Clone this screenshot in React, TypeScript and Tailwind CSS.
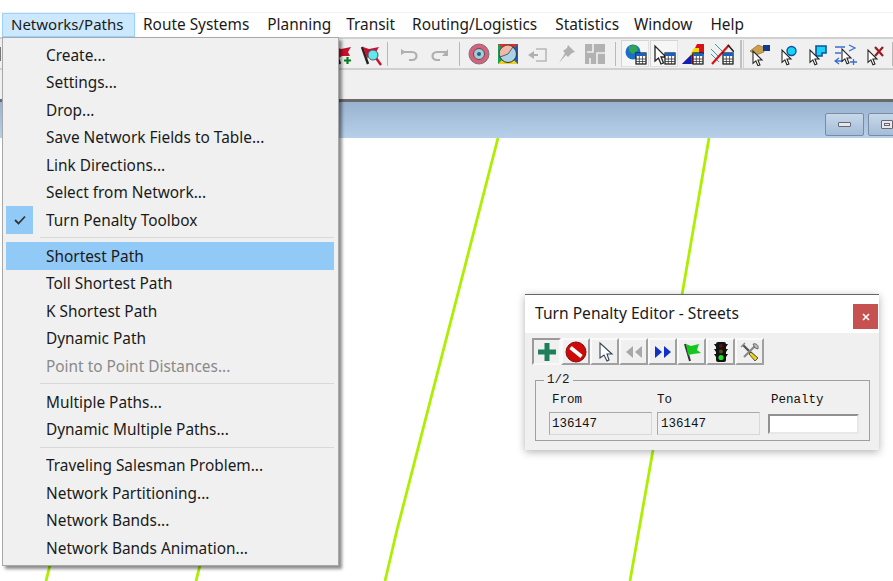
import React from "react";

const sans = { fontFamily: '"Noto Sans", sans-serif' };

const Ic = ({ children, w = 24, cls = "" }: { children: React.ReactNode; w?: number; cls?: string }) => (
  <svg width={w} height={24} viewBox={`0 0 ${w} 24`} className={`shrink-0 ${cls}`}>{children}</svg>
);

const Cursor = ({ x = 0, y = 4, s = 0.82 }: { x?: number; y?: number; s?: number }) => (
  <path transform={`translate(${x} ${y}) scale(${s})`} d="M0 0V15L3.5 12L6 18L8.5 17L6 11H11Z" fill="#fff" stroke="#222" strokeWidth="1.3" />
);

const Grid = ({ x, y }: { x: number; y: number }) => (
  <g transform={`translate(${x} ${y})`}>
    <rect x="0" y="0" width="10" height="11" fill="#fff" stroke="#111" strokeWidth="1.2" />
    <rect x="0" y="0" width="10" height="3" fill="#1560c0" />
    <path d="M3.3 3V11M6.6 3V11M0 6H10M0 8.5H10" stroke="#333" strokeWidth=".8" />
  </g>
);

const Flag = ({ children }: { children: React.ReactNode }) => (
  <Ic w={22}>
    <path d="M2 5L8 22" stroke="#222" strokeWidth="2.4" />
    <path d="M3 5L9 7L19 5L16 10L18 14L10 14L7 16Z" fill="#c8102e" />
    {children}
  </Ic>
);

function MenuBar() {
  const items: [string, string][] = [
    ["Route Systems", "ml-[8px]"],
    ["Planning", "ml-[18px]"],
    ["Transit", "ml-[15px]"],
    ["Routing/Logistics", "ml-[17px]"],
    ["Statistics", "ml-[18px]"],
    ["Window", "ml-[15px]"],
    ["Help", "ml-[18px]"],
  ];
  return (
    <div className="flex h-[24px] items-center bg-white pl-[2px] text-[15.4px] text-[#1a1a1a]">
      <div className="flex h-[24px] w-[133px] items-center border border-[#99d1ff] bg-[#cce8ff] pb-[2px] pl-[8px] text-[15px]">Networks/Paths</div>
      {items.map(([t, m]) => (
        <span key={t} className={m}>{t}</span>
      ))}
    </div>
  );
}

function Toolbar() {
  return (
    <div className="flex h-[33px] items-center border-y-2 border-y-[#d0d0d0] bg-[#f0f0f0]">
      <div className="h-[14px] w-[2px] bg-[#777]" />
      <div className="ml-[331px] flex items-center gap-[6px]">
        <Flag>
          <path d="M12 18.5H19M15.5 15V22" stroke="#0a7a1e" strokeWidth="2.2" />
        </Flag>
        <Flag>
          <path d="M16 16L21 23" stroke="#c8102e" strokeWidth="2.4" />
          <circle cx="13" cy="13" r="5" fill="#5fe8ee" stroke="#556" />
        </Flag>
      </div>
      <div className="ml-[5px] h-[24px] w-px bg-[#b8b8b8]" />
      <div className="ml-[10px] flex items-center gap-[5px]">
        <Ic>
          <path d="M4 10H14C20 10 20 18 14 18H11" fill="none" stroke="#b0b0b0" strokeWidth="2.2" />
          <path d="M3 7V13L8 10Z" fill="#b0b0b0" />
        </Ic>
        <Ic>
          <path d="M20 10H10C4 10 4 18 10 18H13" fill="none" stroke="#b0b0b0" strokeWidth="2.2" />
          <path d="M21 7V14H15Z" fill="#b0b0b0" />
        </Ic>
      </div>
      <div className="ml-[8px] h-[24px] w-px bg-[#b8b8b8]" />
      <div className="ml-[7px] flex items-center gap-[5px]">
        <Ic>
          <circle cx="12" cy="12" r="10" fill="#d95f7c" stroke="#777" />
          <circle cx="12" cy="12" r="5.5" fill="#a9c9d8" stroke="#555" />
          <circle cx="12" cy="12" r="2" fill="#1c6a80" />
        </Ic>
        <Ic>
          <rect x="2" y="2" width="20" height="20" fill="#17a05a" />
          <path d="M2 2H22L12 12Z" fill="#d8322a" />
          <path d="M2 22L12 12L22 22Z" fill="#f0d020" />
          <path d="M22 2V22L12 12Z" fill="#1560c0" />
          <circle cx="12" cy="12" r="8.5" fill="#a9d3e8" stroke="#333" />
          <path d="M12 12L17 5A8.5 8.5 0 0 0 4 15Z" fill="#f0b8a8" stroke="#333" strokeWidth=".7" />
        </Ic>
        <Ic>
          <path d="M11 7H21V19H11" fill="none" stroke="#b8b8b8" strokeWidth="1.6" />
          <path d="M3 12H7V9L13 13L7 17V14H3Z" fill="#b0b0b0" transform="matrix(-1 0 0 1 16 0)" />
        </Ic>
        <Ic>
          <path d="M14 3L21 10L18 11L14 15L12 13L5 21L11 11L9 9L13 6Z" fill="#b0b0b0" />
        </Ic>
        <Ic>
          <rect x="2" y="2" width="20" height="20" fill="#b2b2b2" />
          <path d="M10 2V10H4M14 22V11H22M7 16V22" stroke="#f0f0f0" strokeWidth="1.6" fill="none" />
        </Ic>
      </div>
      <div className="ml-[8px] h-[24px] w-px bg-[#b8b8b8]" />
      <div className="ml-[5px] flex h-[28px] items-center gap-px">
        <div className="flex h-[27px] w-[28px] items-center justify-center border border-[#e0e0e0] border-l-[#d4d4d4] border-t-[#d4d4d4] bg-[#f6f6f6]">
          <Ic>
            <circle cx="10" cy="10" r="7.5" fill="#1c6fc4" />
            <path d="M6 4L13 3L15 8L10 12L6 9Z" fill="#2ea84a" />
            <Grid x={13} y={11} />
          </Ic>
        </div>
        <div className="flex h-[27px] w-[28px] items-center justify-center border border-[#e0e0e0] border-l-[#d4d4d4] border-t-[#d4d4d4] bg-[#f6f6f6]">
          <Ic>
            <Cursor x={3} y={4} s={1} />
            <Grid x={13} y={11} />
          </Ic>
        </div>
        <div className="flex h-[27px] w-[28px] items-center justify-center">
          <Ic>
            <path d="M1 22L11 12L16 2H23V12H12V22Z" fill="#d8101a" />
            <path d="M7 17L13 6H18V12H11Z" fill="#f5d800" />
            <path d="M1 22L10 13V22Z" fill="#1020b0" />
            <Grid x={12} y={11} />
          </Ic>
        </div>
        <div className="flex h-[27px] w-[28px] items-center justify-center">
          <Ic>
            <path d="M1 7L9 15M1 12L9 20M5 2L12 9" stroke="#2aa0a8" strokeWidth="1" />
            <path d="M2 22L19 3" stroke="#d8101a" strokeWidth="2.2" />
            <path d="M18 3L24 10" stroke="#222" strokeWidth="1.6" />
            <Grid x={13} y={11} />
          </Ic>
        </div>
      </div>
      <div className="ml-[4px] h-[28px] w-[3px] border-x border-x-[#c0c0c0]" />
      <div className="ml-[1px] h-[28px] w-[4px] self-end border-l border-l-[#d0d0d0]" />
      <div className="ml-px flex items-center gap-[5px]">
        <Ic>
          <path d="M3 9L11 3L16 5L17 10L9 13Z" fill="#c9a050" stroke="#8a6a30" strokeWidth=".7" />
          <path d="M16 3H23V9H16Z" fill="#103a90" />
          <Cursor x={6} y={9} />
        </Ic>
        <Ic>
          <circle cx="15.5" cy="9" r="4.5" fill="#18d4f4" stroke="#1050a0" strokeWidth="1.4" />
          <Cursor x={6} y={8} />
        </Ic>
        <Ic>
          <path d="M11 4H21V11H17V14H11Z" fill="#18d4f4" stroke="#1050a0" strokeWidth="1.6" />
          <Cursor x={5} y={8} />
        </Ic>
        <Ic>
          <path d="M1 5H11M15 3L21 6L15 9M1 11H7M1 19H9M16 20H23M19.5 17V23M5 22L1 19L5 16" fill="none" stroke="#3a6fd0" strokeWidth="1.3" />
          <Cursor x={8} y={7} />
        </Ic>
        <Ic>
          <path d="M12 5L20 14M20 5L12 14" stroke="#9c1a20" strokeWidth="2.2" />
          <Cursor x={5} y={8} />
        </Ic>
      </div>
      <div className="ml-[5px] h-[24px] w-px bg-[#b8b8b8]" />
    </div>
  );
}

function Lines() {
  return (
    <svg width="893" height="443" viewBox="0 138 893 443" className="absolute left-0 top-0">
      <g fill="none" stroke="#aeee00" strokeWidth="2.8">
        <path d="M498 138L397 530L385 581" />
        <path d="M709 138L682 295" />
        <path d="M653 450L630 581" />
        <path d="M50 565L46 581" />
        <path d="M200 565L196 581" />
      </g>
    </svg>
  );
}

function Menu() {
  const Item = ({ t, check, active, off }: { t: string; check?: boolean; active?: boolean; off?: boolean }) => (
    <div className={`relative flex h-[27.5px] items-center pl-[40px] pt-[1px] text-[15.4px] ${active ? "bg-[#91c9f7]" : ""} ${off ? "text-[#8a8a8a]" : "text-[#1a1a1a]"}`}>
      {check && (
        <div className="absolute left-0 top-0 flex h-[27.5px] w-[27px] items-center justify-center bg-[#91c9f7]">
          <svg width="12" height="10" viewBox="0 0 12 10"><path d="M1 5L4.5 8.5L11 1.5" fill="none" stroke="#333" strokeWidth="1.8" /></svg>
        </div>
      )}
      {t}
    </div>
  );
  const Sep = () => (
    <div className="flex h-[8.6px] items-center pl-[34px]"><div className="h-px w-full bg-[#d8d8d8]" /></div>
  );
  return (
    <div className="absolute left-[2px] top-[37px] w-[337px] border border-[#a8a8a8] bg-[#f0f0f0] p-[3px] pr-[4px] shadow-[3px_3px_3px_rgba(0,0,0,0.45)]" style={sans}>
      <Item t="Create..." />
      <Item t="Settings..." />
      <Item t="Drop..." />
      <Item t="Save Network Fields to Table..." />
      <Item t="Link Directions..." />
      <Item t="Select from Network..." />
      <Item t="Turn Penalty Toolbox" check />
      <Sep />
      <Item t="Shortest Path" active />
      <Item t="Toll Shortest Path" />
      <Item t="K Shortest Path" />
      <Item t="Dynamic Path" />
      <Item t="Point to Point Distances..." off />
      <Sep />
      <Item t="Multiple Paths..." />
      <Item t="Dynamic Multiple Paths..." />
      <Sep />
      <Item t="Traveling Salesman Problem..." />
      <Item t="Network Partitioning..." />
      <Item t="Network Bands..." />
      <Item t="Network Bands Animation..." />
    </div>
  );
}

function Dialog() {
  const Btn = ({ children, on }: { children: React.ReactNode; on?: boolean }) => (
    <div className={`flex h-[27px] w-[29px] items-center justify-center border-2 ${on ? "border-b-[#f8f8f8] border-l-[#9a9a9a] border-r-[#f8f8f8] border-t-[#9a9a9a]" : "border-b-[#a0a0a0] border-l-[#fafafa] border-r-[#a0a0a0] border-t-[#fafafa]"}`}>
      {children}
    </div>
  );
  const mono = { fontFamily: '"Liberation Mono", "DejaVu Sans Mono", monospace' };
  return (
    <div className="absolute left-[525px] top-[294px] w-[354px] border-t border-t-[#666] bg-[#f0f0f0] shadow-[0_2px_8px_rgba(0,0,0,0.3)]">
      <div className="flex h-[38px] justify-between bg-white pl-[10px] pr-px text-[15.6px] text-[#1a1a1a]" style={sans}>
        <span className="mb-[1px] self-center">Turn Penalty Editor - Streets</span>
        <div className="mt-[9px] flex h-[25px] w-[25px] items-center justify-center bg-[#c75050]">
          <svg width="8" height="8" viewBox="0 0 8 8"><path d="M1 1L7 7M7 1L1 7" stroke="#fff" strokeWidth="1.6" /></svg>
        </div>
      </div>
      <div className="flex pl-[7px] pt-[5px]">
        <Btn on>
          <svg width="20" height="20" viewBox="0 0 20 20"><path d="M7.5 1H12.5V7.5H19V12.5H12.5V19H7.5V12.5H1V7.5H7.5Z" fill="#1f7f5a" /></svg>
        </Btn>
        <Btn>
          <svg width="22" height="22" viewBox="0 0 22 22"><circle cx="11" cy="11" r="10" fill="#cc0a0a" stroke="#8a0a0a" strokeWidth="1" /><path d="M5.5 6.5L16.5 15.5" stroke="#fff" strokeWidth="3.6" /></svg>
        </Btn>
        <Btn>
          <svg width="20" height="22" viewBox="0 0 20 22"><path d="M5 2V17L9 14L12 20L14 19L12 13H17Z" fill="#fff" stroke="#345" strokeWidth="1.1" /></svg>
        </Btn>
        <Btn>
          <svg width="20" height="14" viewBox="0 0 20 14"><path d="M9 1V13L2 7ZM18 1V13L11 7Z" fill="#a8a8a8" /></svg>
        </Btn>
        <Btn>
          <svg width="20" height="14" viewBox="0 0 20 14"><path d="M2 1V13L9 7ZM11 1V13L18 7Z" fill="#1030c8" /></svg>
        </Btn>
        <Btn>
          <svg width="20" height="22" viewBox="0 0 20 22"><path d="M3 3L8 20" stroke="#333" strokeWidth="2" /><path d="M4 3L9 5L17 3L15 9L19 12L11 13L6 14Z" fill="#12c81e" /></svg>
        </Btn>
        <Btn>
          <svg width="16" height="22" viewBox="0 0 16 22"><rect x="3" y="1" width="10" height="20" rx="2" fill="#111" /><path d="M1 3H15L13 6H3ZM1 8H15L13 11H3ZM1 13H15L13 16H3Z" fill="#111" /><circle cx="8" cy="5" r="2" fill="#5a1010" /><circle cx="8" cy="10.5" r="2" fill="#5a4a10" /><circle cx="8" cy="16.5" r="2.6" fill="#20e030" /></svg>
        </Btn>
        <Btn>
          <svg width="20" height="20" viewBox="0 0 20 20"><path d="M3 3L17 17" stroke="#555" strokeWidth="2.4" /><path d="M1 5L5 1" stroke="#888" strokeWidth="1.5" /><path d="M16 3L4 15" stroke="#888" strokeWidth="2.2" /><path d="M11 10L18 16L15 19L9 12Z" fill="#e8d020" stroke="#333" strokeWidth=".8" /><path d="M13 2C16 1 19 3 18 7L15 6Z" fill="#bbb" stroke="#333" strokeWidth=".6" /></svg>
        </Btn>
      </div>
      <fieldset className="mx-[10px] mb-[9px] mt-[9px] h-[67px] w-[335px] border border-[#a0a0a0] pl-[13px] pt-[4px]" style={mono}>
        <legend className="-ml-[5px] px-[3px] text-[12.5px] leading-[13px] text-[#1a1a1a]">1/2</legend>
        <div className="flex pt-[1px] text-[12.5px] leading-[16px] text-[#111]">
          <span className="w-[108px] pl-[3px]">From</span>
          <span className="w-[114px]">To</span>
          <span>Penalty</span>
        </div>
        <div className="mt-[4px] flex items-center text-[12.5px] text-[#111]">
          <div className="flex h-[23px] w-[103px] items-center border border-[#d8d8d8] border-l-[#a8a8a8] border-t-[#a8a8a8] pl-[2px] pt-[2px]">136147</div>
          <div className="ml-[5px] flex h-[23px] w-[103px] items-center border border-[#d8d8d8] border-l-[#a8a8a8] border-t-[#a8a8a8] pl-[3px] pt-[2px]">136147</div>
          <div className="ml-[8px] h-[20px] w-[91px] border-2 border-b-[#e8e8e8] border-l-[#909090] border-r-[#e8e8e8] border-t-[#909090] bg-white" />
        </div>
      </fieldset>
    </div>
  );
}

export default function App() {
  return (
    <div className="relative flex h-[581px] w-[893px] flex-col overflow-hidden bg-white" style={sans}>
      <div className="h-[13px] border-b border-b-[#f2f2f2] bg-white" />
      <MenuBar />
      <Toolbar />
      <div className="h-[29px] bg-[#f0f0f0]" />
      <div className="h-[3px] bg-[#6a6a6a]" />
      <div className="flex h-[36px] items-start justify-end gap-[4px] bg-gradient-to-b from-[#9ab3d0] to-[#b6d0ea] pt-[11px]">
        <div className="flex h-[23px] w-[39px] items-center justify-center rounded-[2px] border border-[#7a8ba3] bg-gradient-to-b from-[#c8d8ea] to-[#a4bdd8]">
          <div className="h-[5px] w-[13px] rounded-[1px] border border-[#667] bg-[#e8e8e8]" />
        </div>
        <div className="mr-[-14px] flex h-[23px] w-[39px] items-center justify-start rounded-[2px] border border-[#7a8ba3] bg-gradient-to-b from-[#c8d8ea] to-[#a4bdd8] pl-[12px]">
          <div className="flex h-[9px] w-[12px] items-center justify-center rounded-[1px] border border-[#667] bg-[#e8e8e8]">
            <div className="h-[3px] w-[6px] border border-[#667]" />
          </div>
        </div>
      </div>
      <div className="relative flex-1 bg-white">
        <Lines />
      </div>
      <Menu />
      <Dialog />
    </div>
  );
}
